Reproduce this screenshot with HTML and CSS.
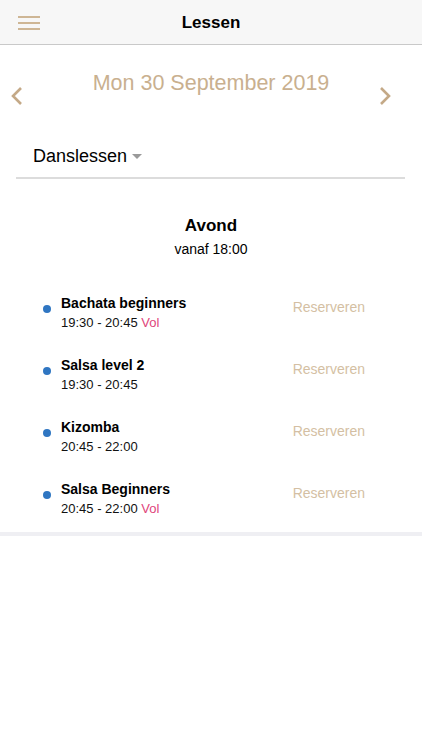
FILE: index.html
```html
<!DOCTYPE html>
<html lang="nl">
<head>
<meta charset="utf-8">
<title>Lessen</title>
<link rel="stylesheet" href="styles.css">
</head>
<body>
<header class="topbar">
  <div class="menu">
    <svg width="22" height="14" viewBox="0 0 22 14"><g stroke="#c9ae8a" stroke-width="1.8"><line x1="0" y1="1" x2="22" y2="1"/><line x1="0" y1="7" x2="22" y2="7"/><line x1="0" y1="13" x2="22" y2="13"/></g></svg>
  </div>
  <h1 class="title">Lessen</h1>
  <div></div>
</header>

<div class="date-nav">
  <svg class="chev chev-left" width="14" height="20" viewBox="0 0 14 20"><polyline points="11,2 3,10 11,18" fill="none" stroke="#c4a987" stroke-width="2.6"/></svg>
  <div class="date">Mon 30 September 2019</div>
  <svg class="chev chev-right" width="14" height="20" viewBox="0 0 14 20"><polyline points="3,2 11,10 3,18" fill="none" stroke="#c4a987" stroke-width="2.6"/></svg>
</div>

<div class="dropdown">
  <span class="dropdown-label">Danslessen</span>
  <span class="caret"></span>
</div>

<section class="block">
  <h2 class="block-title">Avond</h2>
  <div class="block-sub">vanaf 18:00</div>
  <ul class="lessons">
    <li class="lesson">
      <span class="dot"></span>
      <div class="info">
        <div class="name">Bachata beginners</div>
        <div class="time">19:30 - 20:45 <span class="full">Vol</span></div>
      </div>
      <span class="reserve">Reserveren</span>
    </li>
    <li class="lesson">
      <span class="dot"></span>
      <div class="info">
        <div class="name">Salsa level 2</div>
        <div class="time">19:30 - 20:45</div>
      </div>
      <span class="reserve">Reserveren</span>
    </li>
    <li class="lesson">
      <span class="dot"></span>
      <div class="info">
        <div class="name">Kizomba</div>
        <div class="time">20:45 - 22:00</div>
      </div>
      <span class="reserve">Reserveren</span>
    </li>
    <li class="lesson">
      <span class="dot"></span>
      <div class="info">
        <div class="name">Salsa Beginners</div>
        <div class="time">20:45 - 22:00 <span class="full">Vol</span></div>
      </div>
      <span class="reserve">Reserveren</span>
    </li>
  </ul>
</section>
</body>
</html>
```

FILE: styles.css
```css
* { box-sizing: border-box; }
html, body {
  margin: 0;
  padding: 0;
  background: #ffffff;
  font-family: "Liberation Sans", Arial, sans-serif;
  color: #000;
}
.topbar {
  height: 45px;
  background: #f7f7f7;
  border-bottom: 1px solid #c9c9c9;
  display: grid;
  grid-template-columns: 1fr auto 1fr;
  align-items: center;
}
.menu {
  padding-left: 18px;
  display: flex;
  align-items: center;
  height: 44px;
  padding-top: 1px;
}
.menu svg { display: block; }
.title {
  margin: 0;
  padding-top: 2px;
  font-size: 17px;
  line-height: 22px;
  font-weight: bold;
}
.date-nav {
  display: grid;
  grid-template-columns: 1fr auto 1fr;
  align-items: start;
  padding-top: 25px;
}
.date {
  font-size: 21.5px;
  line-height: 26px;
  color: #c9b08f;
}
.chev { display: block; margin-top: 16px; }
.chev-left { justify-self: start; margin-left: 10px; }
.chev-right { justify-self: end; margin-right: 30px; }
.dropdown {
  margin: 38px 17px 0 16px;
  padding: 0 0 9px 17px;
  border-bottom: 2px solid #dcdcdc;
  display: flex;
  align-items: center;
}
.dropdown-label {
  font-size: 18px;
  line-height: 24px;
}
.caret {
  margin-left: 5px;
  width: 0;
  height: 0;
  border-left: 5px solid transparent;
  border-right: 5px solid transparent;
  border-top: 5px solid #9a9a9a;
}
.block {
  border-bottom: 4px solid #efeff3;
  padding-bottom: 14px;
}
.block-title {
  margin: 36px 0 0;
  text-align: center;
  font-size: 17px;
  line-height: 22px;
  font-weight: bold;
}
.block-sub {
  margin-top: 3px;
  text-align: center;
  font-size: 14px;
  line-height: 18px;
}
.lessons {
  list-style: none;
  margin: 36px 0 0;
  padding: 0 57px 0 43px;
  display: flex;
  flex-direction: column;
  gap: 24px;
}
.lesson {
  display: flex;
  align-items: flex-start;
}
.dot {
  width: 8px;
  height: 8px;
  border-radius: 50%;
  background: #2f76c2;
  margin-top: 11px;
  margin-right: 10px;
  flex: none;
}
.info { flex: 1; }
.name {
  font-size: 14px;
  line-height: 18px;
  font-weight: bold;
}
.time {
  margin-top: 2px;
  font-size: 13px;
  line-height: 18px;
  color: #111;
}
.full { color: #e0457b; }
.reserve {
  margin-top: 4px;
  font-size: 14px;
  line-height: 18px;
  color: #d4bfa3;
}
```
